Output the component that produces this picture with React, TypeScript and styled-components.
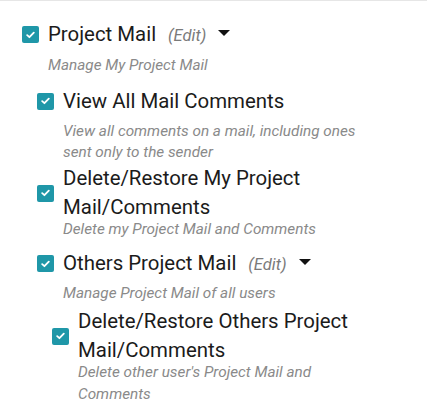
import React from 'react';
import styled, { createGlobalStyle } from 'styled-components';

const GlobalStyle = createGlobalStyle`
  html, body {
    margin: 0;
    padding: 0;
    background: #ffffff;
  }
  body {
    font-family: Roboto, 'Liberation Sans', Arial, sans-serif;
    color: #1b1b1b;
  }
`;

type Permission = {
  id: string;
  label: string;
  description: string;
  editable?: boolean;
  children?: Permission[];
};

const permissions: Permission[] = [
  {
    id: 'project-mail',
    label: 'Project Mail',
    description: 'Manage My Project Mail',
    editable: true,
    children: [
      {
        id: 'view-all',
        label: 'View All Mail Comments',
        description: 'View all comments on a mail, including ones sent only to the sender',
      },
      {
        id: 'delete-my',
        label: 'Delete/Restore My Project Mail/Comments',
        description: 'Delete my Project Mail and Comments',
      },
      {
        id: 'others',
        label: 'Others Project Mail',
        description: 'Manage Project Mail of all users',
        editable: true,
        children: [
          {
            id: 'delete-others',
            label: 'Delete/Restore Others Project Mail/Comments',
            description: "Delete other user's Project Mail and Comments",
          },
        ],
      },
    ],
  },
];

const SPage = styled.div`
  border-top: 1px solid #e6e6e6;
  padding: 11px 52px 0 22px;
`;

const SList = styled.div<{ $nested?: boolean }>`
  display: flex;
  flex-direction: column;
  gap: 0.5px;
  padding-left: ${({ $nested }) => ($nested ? '15px' : '0')};
  margin-top: ${({ $nested }) => ($nested ? '2.5px' : '0')};
`;

const SItem = styled.div`
  display: grid;
  grid-template-columns: 17px 1fr;
  column-gap: 9px;
`;

const SRow = styled.div`
  grid-column: 1 / -1;
  display: grid;
  grid-template-columns: 17px 1fr;
  column-gap: 9px;
  align-items: center;
  min-height: 45px;
`;

const SCheckbox = styled.span`
  width: 17px;
  height: 17px;
  border-radius: 2px;
  background: #1f97a8;
  display: flex;
  align-items: center;
  justify-content: center;
`;

const SLabel = styled.div`
  font-size: 20.4px;
  line-height: 29px;
  color: #1b1b1b;
`;

const SEdit = styled.span`
  font-style: italic;
  font-size: 16.5px;
  color: #7a7a7a;
  margin-left: 12px;
`;

const SCaret = styled.span`
  display: inline-block;
  width: 0;
  height: 0;
  margin-left: 12px;
  margin-bottom: 4px;
  vertical-align: middle;
  border-left: 6px solid transparent;
  border-right: 6px solid transparent;
  border-top: 6px solid #111111;
`;

const SDescription = styled.div<{ $top?: boolean }>`
  grid-column: 2;
  margin-top: ${({ $top }) => ($top ? '-2.5px' : '-3px')};
  font-size: 15.3px;
  line-height: 21.5px;
  font-style: italic;
  color: #8a8a8a;
`;

const SChildren = styled.div`
  grid-column: 1 / -1;
`;

const Check = () => (
  <svg width="9" height="8" viewBox="0 0 9 8" fill="none">
    <path d="M1.2 4.2 L3.4 6.2 L7.8 1.6" stroke="#ffffff" strokeWidth="1.8" strokeLinecap="round" strokeLinejoin="round" />
  </svg>
);

const PermissionItem = ({ item, top }: { item: Permission; top?: boolean }) => (
  <SItem>
    <SRow>
      <SCheckbox>
        <Check />
      </SCheckbox>
      <SLabel>
        {item.label}
        {item.editable && (
          <>
            <SEdit>(Edit)</SEdit>
            <SCaret />
          </>
        )}
      </SLabel>
    </SRow>
    <SDescription $top={top}>{item.description}</SDescription>
    {item.children && (
      <SChildren>
        <SList $nested>
          {item.children.map((child) => (
            <PermissionItem key={child.id} item={child} />
          ))}
        </SList>
      </SChildren>
    )}
  </SItem>
);

export default function App() {
  return (
    <>
      <GlobalStyle />
      <SPage>
        <SList>
          {permissions.map((p) => (
            <PermissionItem key={p.id} item={p} top />
          ))}
        </SList>
      </SPage>
    </>
  );
}
